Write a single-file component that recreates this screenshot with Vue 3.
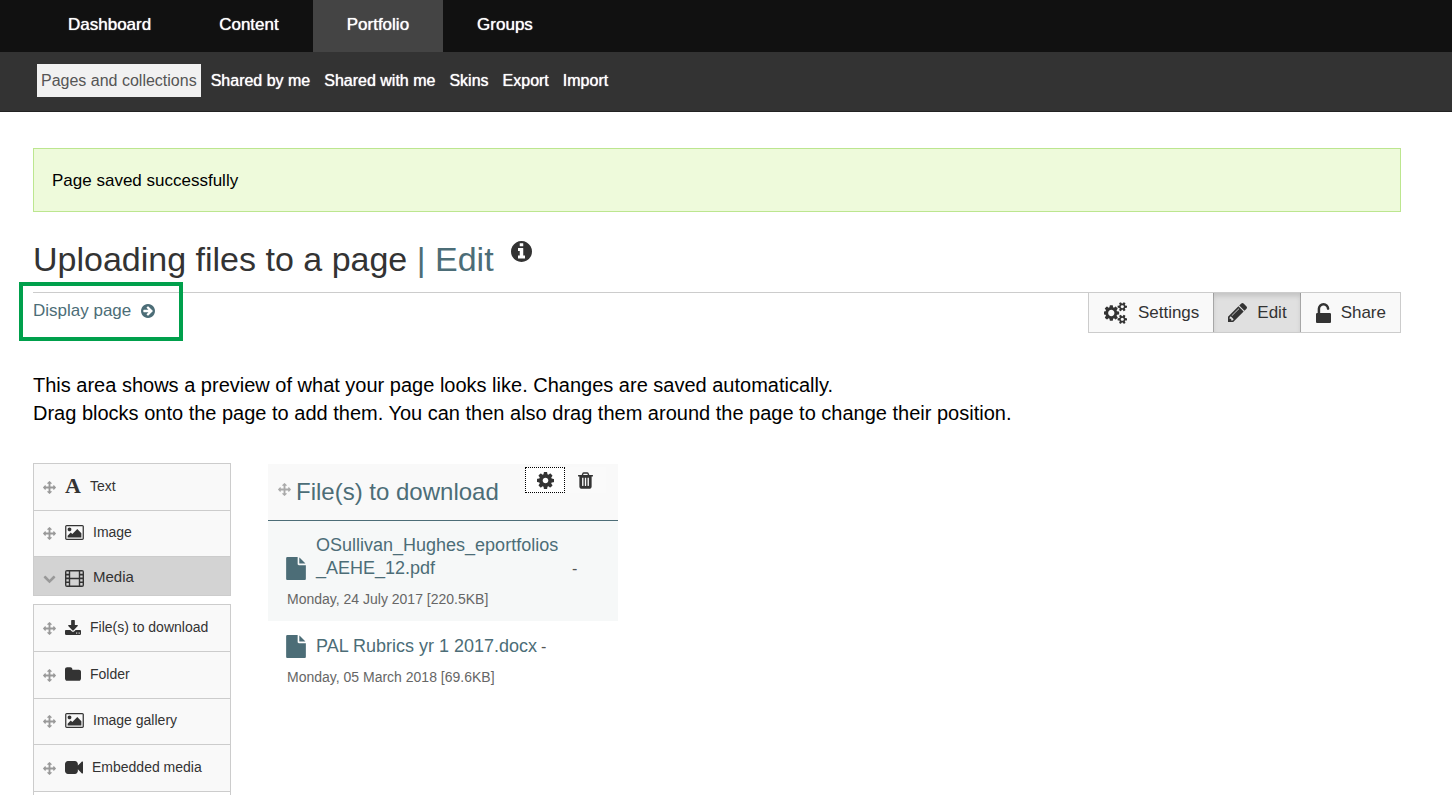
<script setup>
import { h } from 'vue'

const glyphs = {
  cogs: { box: '0 0 1920 1792', w: 24, h: 22, d: 'M832 896q0-106-75-181t-181-75-181 75-75 181 75 181 181 75 181-75 75-181zm768 512q0-52-38-90t-90-38-90 38-38 90q0 53 37.5 90.5t90.5 37.5 90.5-37.5 37.5-90.5zm0-1024q0-52-38-90t-90-38-90 38-38 90q0 53 37.5 90.5t90.5 37.5 90.5-37.5 37.5-90.5zm-384 421v185q0 10-7 19.5t-16 10.5l-155 24q-11 35-32 76 34 48 90 115 7 11 7 20 0 12-7 19-23 30-82.5 89.5t-78.5 59.5q-11 0-21-7l-115-90q-37 19-77 31-11 108-23 155-7 24-30 24h-186q-11 0-20-7.5t-10-17.5l-23-153q-34-10-75-31l-118 89q-7 7-20 7-11 0-21-8-144-133-144-160 0-9 7-19 10-14 41-53t47-61q-23-44-35-82l-152-24q-10-1-17-9.5t-7-19.5v-185q0-10 7-19.5t16-10.5l155-24q11-35 32-76-34-48-90-115-7-11-7-20 0-12 7-20 22-30 82-89t79-59q11 0 21 7l115 90q34-18 77-32 11-108 23-154 7-24 30-24h186q11 0 20 7.5t10 17.5l23 153q34 10 75 31l118-89q8-7 20-7 11 0 21 8 144 133 144 160 0 8-7 19-12 16-42 54t-45 60q23 48 34 82l152 23q10 2 17 10.5t7 19.5zm640 533v140q0 16-149 31-12 27-30 52 51 113 51 138 0 4-4 7-122 71-124 71-8 0-46-47t-52-68q-20 2-30 2t-30-2q-14 21-52 68t-46 47q-2 0-124-71-4-3-4-7 0-25 51-138-18-25-30-52-149-15-149-31v-140q0-16 149-31 13-29 30-52-51-113-51-138 0-4 4-7 4-2 35-20t59-34 30-16q8 0 46 46.5t52 67.5q20-2 30-2t30 2q51-71 92-112l6-2q4 0 124 70 4 3 4 7 0 25-51 138 17 23 30 52 149 15 149 31zm0-1024v140q0 16-149 31-12 27-30 52 51 113 51 138 0 4-4 7-122 71-124 71-8 0-46-47t-52-68q-20 2-30 2t-30-2q-14 21-52 68t-46 47q-2 0-124-71-4-3-4-7 0-25 51-138-18-25-30-52-149-15-149-31v-140q0-16 149-31 13-29 30-52-51-113-51-138 0-4 4-7 4-2 35-20t59-34 30-16q8 0 46 46.5t52 67.5q20-2 30-2t30 2q51-71 92-112l6-2q4 0 124 70 4 3 4 7 0 25-51 138 17 23 30 52 149 15 149 31z' },
  cog: { box: '128 128 1536 1536', w: 17, h: 17, d: 'M1152 896q0-106-75-181t-181-75-181 75-75 181 75 181 181 75 181-75 75-181zm512-109v222q0 12-8 23t-20 13l-185 28q-19 54-39 91 35 50 107 138 10 12 10 25t-9 23q-27 37-99 108t-94 71q-12 0-26-9l-138-108q-44 23-91 38-16 136-29 186-7 28-36 28h-222q-14 0-24.5-8.5t-11.5-21.5l-28-184q-49-16-90-37l-141 107q-10 9-25 9-14 0-25-11-126-114-165-168-7-10-7-23 0-12 8-23 15-21 51-66.5t54-70.5q-27-50-41-99l-183-27q-13-2-21-12.5t-8-23.5v-222q0-12 8-23t19-13l186-28q14-46 39-92-40-57-107-138-10-12-10-24 0-10 9-23 26-36 98.5-107.5t94.5-71.5q13 0 26 10l138 107q44-23 91-38 16-136 29-186 7-28 36-28h222q14 0 24.5 8.5t11.5 21.5l28 184q49 16 90 37l142-107q9-9 24-9 13 0 25 10 129 119 165 170 7 8 7 22 0 12-8 23-15 21-51 66.5t-54 70.5q26 50 41 98l183 28q13 2 21 12.5t8 23.5z' },
  trash: { box: '192 128 1408 1536', w: 15, h: 17, d: 'M704 1376v-704q0-14-9-23t-23-9h-64q-14 0-23 9t-9 23v704q0 14 9 23t23 9h64q14 0 23-9t9-23zm256 0v-704q0-14-9-23t-23-9h-64q-14 0-23 9t-9 23v704q0 14 9 23t23 9h64q14 0 23-9t9-23zm256 0v-704q0-14-9-23t-23-9h-64q-14 0-23 9t-9 23v704q0 14 9 23t23 9h64q14 0 23-9t9-23zm-544-992h448l-48-117q-7-9-17-11h-317q-10 2-17 11zm928 32v64q0 14-9 23t-23 9h-96v948q0 83-47 143.5t-113 60.5h-832q-66 0-113-58.5t-47-141.5v-952h-96q-14 0-23-9t-9-23v-64q0-14 9-23t23-9h309l70-167q15-37 54-63t79-26h320q40 0 79 26t54 63l70 167h309q14 0 23 9t9 23z' },
  pencil: { box: '128 149 1515 1515', w: 19, h: 19, d: 'M491 1536l91-91-235-235-91 91v107h128v128h107zm523-928q0-22-22-22-10 0-17 7l-542 542q-7 7-7 17 0 22 22 22 10 0 17-7l542-542q7-7 7-17zm-54-192l416 416-832 832h-416v-416zm683 96q0 53-37 90l-166 166-416-416 166-165q36-38 90-38 53 0 91 38l235 234q37 39 37 91z' },
  unlock: { box: '320 128 1152 1536', w: 15, h: 20, d: 'M1376 896q40 0 68 28t28 68v576q0 40-28 68t-68 28h-960q-40 0-68-28t-28-68v-576q0-40 28-68t68-28h32v-320q0-185 131.5-316.5t316.5-131.5 316.5 131.5 131.5 316.5q0 26-19 45t-45 19h-64q-26 0-45-19t-19-45q0-106-75-181t-181-75-181 75-75 181v320h736z' },
  info: { box: '128 128 1536 1536', w: 21, h: 21, d: 'M1152 1376v-160q0-14-9-23t-23-9h-96v-512q0-14-9-23t-23-9h-320q-14 0-23 9t-9 23v160q0 14 9 23t23 9h96v320h-96q-14 0-23 9t-9 23v160q0 14 9 23t23 9h448q14 0 23-9t9-23zm-128-896v-160q0-14-9-23t-23-9h-192q-14 0-23 9t-9 23v160q0 14 9 23t23 9h192q14 0 23-9t9-23zm640 416q0 209-103 385.5t-279.5 279.5-385.5 103-385.5-103-279.5-279.5-103-385.5 103-385.5 279.5-279.5 385.5-103 385.5 103 279.5 279.5 103 385.5z' },
  go: { box: '128 128 1536 1536', w: 14, h: 14, d: 'M1413 896q0-27-18-45l-91-91-362-362q-18-18-45-18t-45 18l-91 91q-18 18-18 45t18 45l189 189h-502q-26 0-45 19t-19 45v128q0 26 19 45t45 19h502l-189 189q-19 19-19 45t19 45l91 91q18 18 45 18t45-18l362-362 91-91q18-18 18-45zm251 0q0 209-103 385.5t-279.5 279.5-385.5 103-385.5-103-279.5-279.5-103-385.5 103-385.5 279.5-279.5 385.5-103 385.5 103 279.5 279.5 103 385.5z' },
  move: { box: '0 0 1792 1792', w: 13, h: 13, d: 'M1792 896q0 26-19 45l-256 256q-19 19-45 19t-45-19-19-45v-128h-384v384h128q26 0 45 19t19 45-19 45l-256 256q-19 19-45 19t-45-19l-256-256q-19-19-19-45t19-45 45-19h128v-384h-384v128q0 26-19 45t-45 19-45-19l-256-256q-19-19-19-45t19-45l256-256q19-19 45-19t45 19 19 45v128h384v-384h-128q-26 0-45-19t-19-45 19-45l256-256q19-19 45-19t45 19l256 256q19 19 19 45t-19 45-45 19h-128v384h384v-128q0-26 19-45t45-19 45 19l256 256q19 19 19 45z' },
  chevron: { box: '0 160 1792 1792', w: 13, h: 13, d: 'M1683 808l-742 741q-19 19-45 19t-45-19l-742-741q-19-19-19-45.5t19-45.5l166-165q19-19 45-19t45 19l531 531 531-531q19-19 45-19t45 19l166 165q19 19 19 45.5t-19 45.5z' },
  image: { box: '0 128 1920 1536', w: 19, h: 15, d: 'M640 576q0 80-56 136t-136 56-136-56-56-136 56-136 136-56 136 56 56 136zm1024 384v448h-1408v-192l320-320 160 160 512-512zm96-704h-1600q-13 0-22.5 9.5t-9.5 22.5v1216q0 13 9.5 22.5t22.5 9.5h1600q13 0 22.5-9.5t9.5-22.5v-1216q0-13-9.5-22.5t-22.5-9.5zm160 32v1216q0 66-47 113t-113 47h-1600q-66 0-113-47t-47-113v-1216q0-66 47-113t113-47h1600q66 0 113 47t47 113z' },
  film: { box: '0 0 19 17', w: 19, h: 17, d: 'M2 0H17Q19 0 19 2V15Q19 17 17 17H2Q0 17 0 15V2Q0 0 2 0zM1.4 1.6V3.8H3.8V1.6zM1.4 5.4V7.6H3.8V5.4zM1.4 9.2V11.4H3.8V9.2zM1.4 13V15.4H3.8V13zM5.2 1.4V7.8H13.8V1.4zM5.2 9.2V15.6H13.8V9.2zM15.2 1.6V3.8H17.6V1.6zM15.2 5.4V7.6H17.6V5.4zM15.2 9.2V11.4H17.6V9.2zM15.2 13V15.4H17.6V13z' },
  download: { box: '64 0 1664 1536', w: 16, h: 15, d: 'M1344 1344q0-26-19-45t-45-19-45 19-19 45 19 45 45 19 45-19 19-45zm256 0q0-26-19-45t-45-19-45 19-19 45 19 45 45 19 45-19 19-45zm128-224v320q0 40-28 68t-68 28h-1472q-40 0-68-28t-28-68v-320q0-40 28-68t68-28h465l135 136q58 56 136 56t136-56l136-136h464q40 0 68 28t28 68zm-325-569q17 41-14 70l-448 448q-18 19-45 19t-45-19l-448-448q-31-29-14-70 17-39 59-39h256v-448q0-26 19-45t45-19h256q26 0 45 19t19 45v448h256q42 0 59 39z' },
  folder: { box: '64 128 1664 1408', w: 16, h: 14, d: 'M1728 608v704q0 92-66 158t-158 66h-1216q-92 0-158-66t-66-158v-960q0-92 66-158t158-66h320q92 0 158 66t66 158v32h672q92 0 158 66t66 158z' },
  video: { box: '0 256 1792 1280', w: 18, h: 13, d: 'M1792 352v1088q0 42-39 59-13 5-25 5-27 0-45-19l-403-403v166q0 119-84.5 203.5t-203.5 84.5h-704q-119 0-203.5-84.5t-84.5-203.5v-704q0-119 84.5-203.5t203.5-84.5h704q119 0 203.5 84.5t84.5 203.5v165l403-402q18-19 45-19 12 0 25 5 39 17 39 59z' },
  file: { box: '128 0 1536 1792', w: 20, h: 23, d: 'M1152 512v-472q22 14 36 28l408 408q14 14 28 36h-472zm-128 32q0 40 28 68t68 28h544v1056q0 40-28 68t-68 28h-1344q-40 0-68-28t-28-68v-1600q0-40 28-68t68-28h800v544z' },
}

const Icon = ({ name }) => {
  const g = glyphs[name]
  return h('svg', { viewBox: g.box, width: g.w, height: g.h, fill: 'currentColor', 'fill-rule': name === 'film' ? 'evenodd' : 'nonzero', 'aria-hidden': 'true' }, [h('path', { d: g.d })])
}
Icon.props = ['name']

const tabs = ['Dashboard', 'Content', 'Portfolio', 'Groups']
const subtabs = ['Pages and collections', 'Shared by me', 'Shared with me', 'Skins', 'Export', 'Import']
const blocks = [
  { label: 'Text', icon: null },
  { label: 'Image', icon: 'image' },
]
const media = [
  { label: 'File(s) to download', icon: 'download' },
  { label: 'Folder', icon: 'folder' },
  { label: 'Image gallery', icon: 'image' },
  { label: 'Embedded media', icon: 'video' },
]
const files = [
  { name: ['OSullivan_Hughes_eportfolios', '_AEHE_12.pdf'], date: 'Monday, 24 July 2017 [220.5KB]' },
  { name: ['PAL Rubrics yr 1 2017.docx'], date: 'Monday, 05 March 2018 [69.6KB]' },
]
</script>

<template>
  <div class="page">
    <header>
      <nav class="main-nav" aria-label="Main">
        <a v-for="t in tabs" :key="t" href="#" :class="{ active: t === 'Portfolio' }">{{ t }}</a>
      </nav>
      <nav class="sub-nav" aria-label="Portfolio">
        <a v-for="(t, i) in subtabs" :key="t" href="#" :class="{ active: i === 0 }">{{ t }}</a>
      </nav>
    </header>

    <main>
      <div class="alert" role="status">Page saved successfully</div>

      <div class="heading">
        <h1>Uploading files to a page <span>| Edit</span></h1>
        <button class="help" type="button" aria-label="Help"><Icon name="info" /></button>
      </div>

      <div class="toolbar">
        <a class="display" href="#">Display page <Icon name="go" /></a>
        <div class="highlight"></div>
        <div class="actions">
          <button type="button"><Icon name="cogs" />Settings</button>
          <button type="button" class="pressed"><Icon name="pencil" />Edit</button>
          <button type="button"><Icon name="unlock" />Share</button>
        </div>
      </div>

      <p class="intro">
        This area shows a preview of what your page looks like. Changes are saved automatically.<br>
        Drag blocks onto the page to add them. You can then also drag them around the page to change their position.
      </p>

      <div class="editor">
        <aside>
          <div class="group">
            <button v-for="b in blocks" :key="b.label" type="button" class="block" :class="{ wide: b.icon === 'image' }">
              <Icon name="move" class="grip" />
              <Icon v-if="b.icon" :name="b.icon" />
              <span v-else class="letter" aria-hidden="true">A</span>
              <span class="label">{{ b.label }}</span>
            </button>
            <button type="button" class="block open" aria-expanded="true">
              <Icon name="chevron" class="grip" />
              <Icon name="film" />
              <span class="label">Media</span>
            </button>
          </div>
          <div class="group more">
            <button v-for="b in media" :key="b.label" type="button" class="block" :class="{ wide: b.icon === 'image' }">
              <Icon name="move" class="grip" />
              <Icon :name="b.icon" />
              <span class="label">{{ b.label }}</span>
            </button>
          </div>
        </aside>

        <section class="card">
          <div class="card-head">
            <Icon name="move" class="grip" />
            <h2>File(s) to download</h2>
            <div class="tools">
              <button type="button" class="focused" aria-label="Configure"><Icon name="cog" /></button>
              <button type="button" aria-label="Remove"><Icon name="trash" /></button>
            </div>
          </div>
          <ul>
            <li v-for="f in files" :key="f.date">
              <div class="file">
                <Icon name="file" class="doc" />
                <a href="#" :class="{ long: f.name.length > 1 }"><template v-for="(part, i) in f.name" :key="part"><br v-if="i">{{ part }}</template></a>
                <span class="dash">-</span>
              </div>
              <div class="date">{{ f.date }}</div>
            </li>
          </ul>
        </section>
      </div>
    </main>
  </div>
</template>

<style>
html, body { margin: 0; background: #fff; scrollbar-width: none; }
</style>

<style scoped>
.page { font-family: "Liberation Sans", Arial, sans-serif; font-size: 17px; color: #000; }
.page *, .page { box-sizing: border-box; }
a { text-decoration: none; }
button { font: inherit; color: #333; margin: 0; border: 0; background: none; padding: 0; }
svg { flex: none; display: block; }

.main-nav { display: flex; background: #111; height: 52px; padding-left: 34px; }
.main-nav a { color: #fff; padding: 0 34px; line-height: 50px; text-shadow: 0 0 1px #fff; }
.main-nav a.active { background: #444; }
.sub-nav { display: flex; align-items: center; gap: 6px; height: 60px; padding: 0 37px 2px; background: #333; border-bottom: 1px solid #222; font-size: 16px; }
.sub-nav a { color: #fff; padding: 0 4px; line-height: 33px; text-shadow: 0 0 1px #fff; }
.sub-nav a.active { background: #f1f1f1; color: #555; text-shadow: none; }

main { padding: 36px 51px 0 33px; }
.alert { border: 1px solid #bce68f; background: #eefadb; padding: 1px 18px 0; line-height: 61px; }
.heading { display: flex; align-items: flex-start; gap: 17px; height: 80px; padding-top: 26px; }
h1 { margin: 0; font-size: 34px; font-weight: 400; line-height: 42px; color: #333; }
h1 span, .display, h2, .file a, .doc { color: #4c6d77; }
.help { padding-top: 3px; }

.toolbar { position: relative; display: flex; justify-content: space-between; align-items: flex-start; border-top: 1px solid #ccc; }
.display { display: flex; align-items: center; gap: 10px; line-height: 36px; }
.highlight { position: absolute; left: -14px; top: -11px; width: 164px; height: 59px; border: 4px solid #00a04c; pointer-events: none; }
.actions { display: flex; border: 1px solid #ccc; border-top: 0; }
.actions button { display: flex; align-items: center; gap: 10px; height: 39px; padding: 0 14px 0 15px; background: #f9f9f9; }
.actions button.pressed { background: #e0e0e0; box-shadow: inset 0 3px 5px rgba(0, 0, 0, .13), inset 1px 0 #b0b0b0, inset -1px 0 #b0b0b0; }

.intro { margin: 38px 0 36px; font-size: 20px; line-height: 28px; }
.editor { display: flex; align-items: flex-start; gap: 37px; }
aside { flex: none; width: 198px; }
.group { border: 1px solid #ccc; border-bottom: 0; }
.more { margin-top: 8px; padding-bottom: 3px; }
.block { display: flex; align-items: center; width: 100%; height: 47px; padding: 0 9px 2px; gap: 9px; background: #f9f9f9; border-bottom: 1px solid #ccc; font-size: 14px; text-align: left; }
.block.wide { height: 46px; }
.block.open { height: 39px; padding: 5px 9px 0; background: #d3d3d3; font-size: 15px; }
.block .grip { color: #999; margin-top: 2px; }
.block .label { padding-bottom: 1px; }
.block.open .label { padding-bottom: 4px; }
.letter { width: 16px; font: bold 22px/22px "Liberation Serif", serif; }

.card { width: 350px; margin-top: 1px; }
.card-head { display: flex; height: 57px; padding: 3px 12px 0 10px; background: #f9f9f9; border-bottom: 1px solid #4c6d77; }
.card-head .grip { color: #aaa; margin-top: 16px; }
h2 { margin: 0 auto 0 5px; font-size: 24px; font-weight: 400; line-height: 50px; }
.tools { display: flex; }
.tools button { display: flex; align-items: center; justify-content: center; width: 41px; height: 26px; background: #fafafa; }
.tools button.focused { width: 40px; background: #fff; border: 1px dotted #000; }
ul { list-style: none; margin: 0; padding: 0; }
li { padding: 13px 18px 11px; }
li:first-child { background: #f6f8f8; }
.file { display: flex; align-items: flex-end; min-height: 24px; font-size: 18px; line-height: 23px; color: #555; }
.file a { margin-left: 10px; }
.file a.long { width: 256px; }
.dash { font-size: 16px; margin-left: 4px; }
.long + .dash { margin-left: 0; }
.date { margin-top: 8px; padding-left: 1px; font-size: 14px; line-height: 22px; color: #666; }
</style>
